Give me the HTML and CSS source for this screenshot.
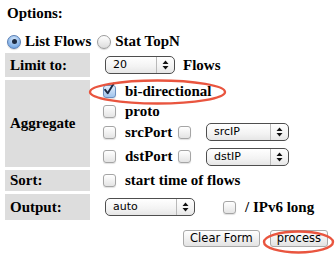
FILE: index.html
```html
<!DOCTYPE html>
<html lang="en">

<head>
  <meta charset="UTF-8" />
  <title>Options</title>
  <link rel="stylesheet" href="styles.css">
</head>

<body>
  <div class="panel">
    <div class="title">Options:</div>

    <div class="modes">
      <span class="radio on"></span><b>List Flows</b>
      <span class="radio"></span><b>Stat TopN</b>
    </div>

    <table class="opts">
      <tr class="row-limit">
        <th>Limit to:</th>
        <td>
          <div class="line">
            <div class="select w-limit"><span class="val">20</span><span class="arrows"><svg width="7" height="10" viewBox="0 0 7 10"><path d="M3.5 0.5 L6.5 4 L0.5 4 Z M3.5 9.5 L6.5 6 L0.5 6 Z" fill="#111" /></svg></span></div>
            <b class="after">Flows</b>
          </div>
        </td>
      </tr>
      <tr class="row-agg">
        <th>Aggregate</th>
        <td>
          <div class="line l1">
            <span class="check on"><svg width="14" height="16" viewBox="0 0 14 16"><path d="M2.5 9 L5.5 13 L12.5 1.5" fill="none" stroke="#1a2740" stroke-width="2.2" stroke-linecap="round" stroke-linejoin="round" /></svg></span>
            <b>bi-directional</b>
          </div>
          <div class="line l2">
            <span class="check"></span><b>proto</b>
          </div>
          <div class="line l3">
            <span class="check"></span><b class="port">srcPort</b>
            <span class="check"></span>
            <div class="select w-ip"><span class="val">srcIP</span><span class="arrows"><svg width="7" height="10" viewBox="0 0 7 10"><path d="M3.5 0.5 L6.5 4 L0.5 4 Z M3.5 9.5 L6.5 6 L0.5 6 Z" fill="#111" /></svg></span></div>
          </div>
          <div class="line l4">
            <span class="check"></span><b class="port">dstPort</b>
            <span class="check"></span>
            <div class="select w-ip"><span class="val">dstIP</span><span class="arrows"><svg width="7" height="10" viewBox="0 0 7 10"><path d="M3.5 0.5 L6.5 4 L0.5 4 Z M3.5 9.5 L6.5 6 L0.5 6 Z" fill="#111" /></svg></span></div>
          </div>
        </td>
      </tr>
      <tr class="row-sort">
        <th>Sort:</th>
        <td>
          <div class="line">
            <span class="check"></span><b>start time of flows</b>
          </div>
        </td>
      </tr>
      <tr class="row-out">
        <th>Output:</th>
        <td>
          <div class="line">
            <div class="select w-out"><span class="val">auto</span><span class="arrows"><svg width="7" height="10" viewBox="0 0 7 10"><path d="M3.5 0.5 L6.5 4 L0.5 4 Z M3.5 9.5 L6.5 6 L0.5 6 Z" fill="#111" /></svg></span></div>
            <span class="check ipv6"></span><b>/ IPv6 long</b>
          </div>
        </td>
      </tr>
    </table>

    <div class="actions">
      <button class="btn">Clear Form</button>
      <button class="btn">process</button>
    </div>

    <!-- red annotation rings drawn over the form -->
    <svg class="marks" width="335" height="258" viewBox="0 0 335 258">
      <ellipse cx="157.5" cy="92" rx="67.5" ry="11.5" fill="none" stroke="#e9553f" stroke-width="2.4" />
      <ellipse cx="298.5" cy="242" rx="34.5" ry="10.5" fill="none" stroke="#e9553f" stroke-width="2.4" />
    </svg>
  </div>
</body>

</html>
```

FILE: styles.css
```css
body {
  margin: 0;
  background-color: #ffffff;
  font-family: "Liberation Serif", "Times New Roman", serif;
  font-size: 15px;
  color: #000;
}

.panel {
  position: relative;
  width: 335px;
  height: 258px;
  padding: 5px 5px 0 5px;
  box-sizing: border-box;
}

.title {
  font-weight: bold;
  height: 17px;
  line-height: 17px;
  padding-left: 2px;
}

.modes {
  display: flex;
  align-items: center;
  height: 17px;
  margin-top: 11px;
  padding-left: 2px;
}

.modes b {
  margin-left: 4px;
  margin-right: 6px;
}

.radio {
  width: 12px;
  height: 12px;
  border-radius: 50%;
  border: 1px solid #9c9c9c;
  background: linear-gradient(#ffffff, #dcdcdc);
  box-shadow: 0 1px 1px rgba(0, 0, 0, 0.15);
  display: flex;
  align-items: center;
  justify-content: center;
}

.radio.on {
  border-color: #5a7fb4;
  background: radial-gradient(circle at 50% 30%, #d7e8fb, #7eaee6 70%, #5b90d6);
}

.radio.on::after {
  content: "";
  width: 5px;
  height: 5px;
  border-radius: 50%;
  background: #1c2a40;
}

.opts {
  border-spacing: 3px;
  margin: 0 -3px;
}

.opts th {
  width: 80px;
  background-color: #dddddd;
  text-align: left;
  padding: 0 0 0 5px;
  vertical-align: middle;
  font-weight: bold;
}

.opts td {
  padding: 0 0 0 10px;
  vertical-align: top;
}

.row-limit th { height: 24px; }
.row-agg th { height: 87px; }
.row-sort th { height: 21px; }
.row-out th { height: 26px; }

.row-limit .line { height: 24px; }
.row-sort .line { height: 21px; }
.row-out .line { height: 26px; }

.line {
  display: flex;
  align-items: center;
}

.line b {
  margin-left: 9px;
}

.line .after {
  margin-left: 8px;
}

.l1 { height: 20px; margin-top: 1px; }
.l2 { height: 20px; }
.l3 { height: 22px; }
.l4 { height: 21px; margin-top: 3px; }

.port {
  width: 48px;
}

.l3 .port + .check,
.l4 .port + .check {
  margin-left: 5px;
  margin-right: 13px;
}

.check {
  width: 11px;
  height: 11px;
  border: 1px solid #a5a5a5;
  border-radius: 3px;
  background: linear-gradient(#ffffff, #e4e4e4);
  box-shadow: 0 1px 1px rgba(0, 0, 0, 0.12);
  display: flex;
  flex-shrink: 0;
}

.check.on {
  background: linear-gradient(#e2eefc, #9fc3ec);
  border-color: #6b8fbf;
}

.check.on svg {
  margin: -5px 0 0 -1px;
}

.check.ipv6 {
  margin-left: 28px;
}

.select {
  display: flex;
  align-items: stretch;
  height: 16px;
  border: 1px solid #4e4e4e;
  border-radius: 5px;
  background: linear-gradient(#ffffff, #f3f3f3 60%, #e6e6e6);
  font-family: "DejaVu Sans", sans-serif;
  font-size: 11px;
  margin-left: 2px;
  flex-shrink: 0;
}

.select .val {
  flex: 1;
  padding-left: 7px;
  line-height: 16px;
}

.select .arrows {
  width: 17px;
  border-left: 1px solid #b9b9b9;
  display: flex;
  align-items: center;
  justify-content: center;
}

.w-limit { width: 68px; }
.w-ip { width: 81px; }
.w-out { width: 88px; }

.actions {
  display: flex;
  justify-content: flex-end;
  gap: 10px;
  margin-top: 7px;
  padding-right: 2px;
}

.btn {
  font-family: "DejaVu Sans", sans-serif;
  font-size: 11.5px;
  height: 17px;
  padding: 0 6px;
  border: 1px solid #a9a9a9;
  border-radius: 3px;
  background: linear-gradient(#ffffff, #f1f1f1 50%, #e3e3e3);
  color: #000;
  line-height: 15px;
}

.marks {
  position: absolute;
  top: 0;
  left: 0;
  pointer-events: none;
}
```
